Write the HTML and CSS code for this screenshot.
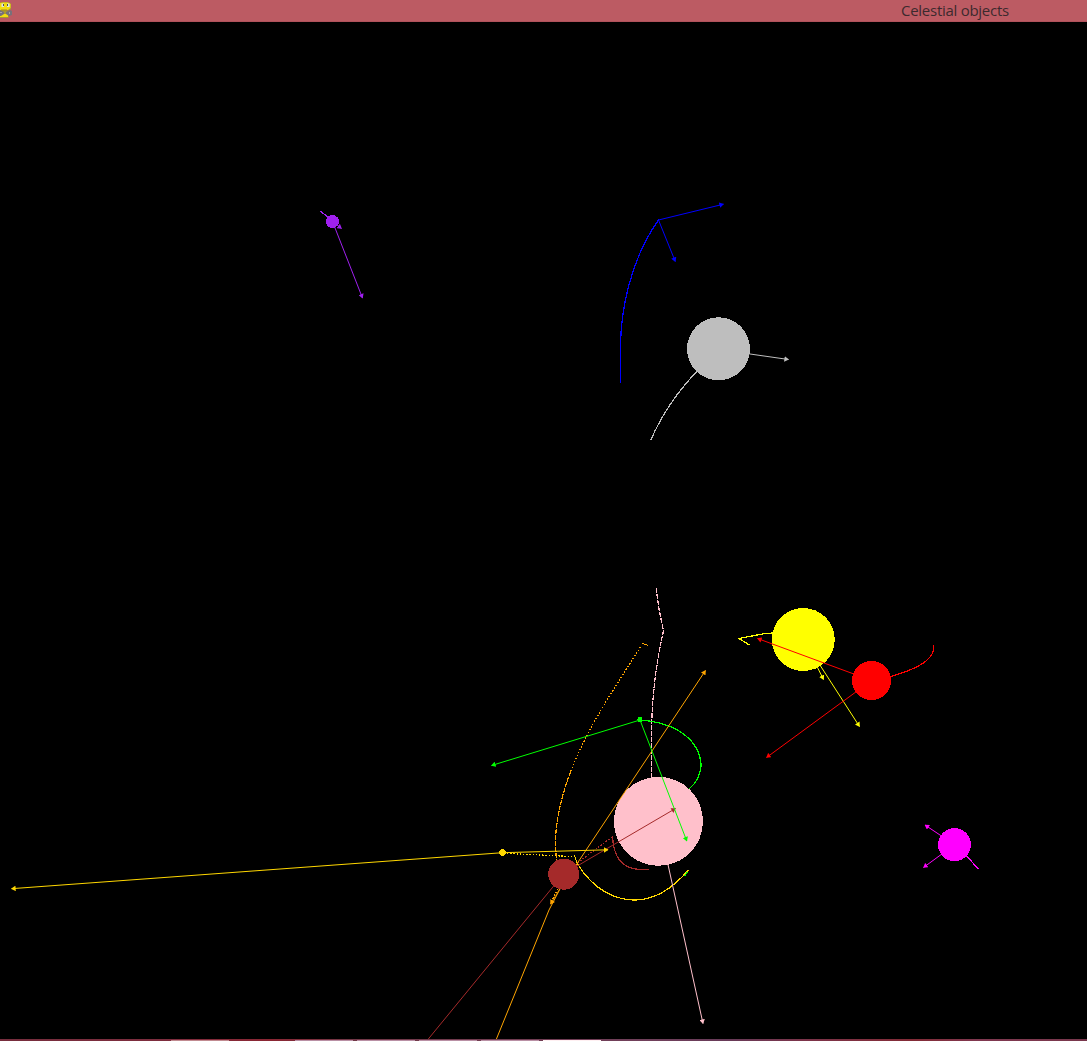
FILE: index.html
```
<!DOCTYPE html>
<html lang="en">
<head>
<meta charset="utf-8">
<title>Celestial objects</title>
<link rel="stylesheet" href="styles.css">
</head>
<body>
<div class="window">
  <header class="titlebar">
    <svg class="app-icon" viewBox="0 0 13 18" width="13" height="18">
      <path fill="#a79832" d="M0 1.500L3 1H8L11 2.500V8L9.500 9.500H7L9 14L8.500 17H0z"/>
      <path fill="#f2dc12" d="M0 2L3 1.500H8L10.500 3V7L8 9H0zM0 13H8V16H0z"/>
      <path fill="#dce6e4" d="M1.500 2.500H4V6H1.500zM7 2.500H9.500V6H7z"/>
      <path fill="#545454" d="M3 3h1v2H3zM7 3h1v2H7z"/>
      <path fill="#77717a" d="M0 9L4 11V13L1 15H0zM6 11L10 9L12 10V14L9 15L6 13z"/>
      <path fill="#aaa0a2" d="M0 11h2v1H0zM9 11h1v2H9z"/>
      <path fill="#a58b20" d="M1 8.500h6v1H1z"/>
    </svg>
    <h1 class="title">Celestial objects</h1>
  </header>
  <svg class="space" viewBox="0 22 1087 1017" width="1087" height="1017">
    <defs>
      <marker id="head" viewBox="0 0 5 6" refX="4.500" refY="3" markerWidth="5" markerHeight="5.500" markerUnits="userSpaceOnUse" orient="auto">
        <path d="M0 0L5 3L0 6z" fill="context-stroke"/>
      </marker>
    </defs>

    <g class="trails">
      <path class="purple" d="M320.5 211.5L332 220"/>
      <path class="blue" d="M658.5 220C630 260 620.5 312 620.5 347V383"/>
      <path class="silver" d="M650.5 440.5Q668 401 697 371.500"/>
      <path class="yellow" d="M749.5 645L739 638.500L765 633.500L773 633"/>
      <path class="red" d="M891 676.500Q931 665 933.5 650V645"/>
      <path class="pink dash" d="M656 588.500L659 609L663.500 631Q652 680 651.500 735V778"/>
      <path class="orange dots" d="M640.500 647L612 692Q583 738 571 771"/>
      <path class="orange" d="M642.500 643.500L648.500 645.500"/>
      <path class="orange dash" d="M571 771C559 801 555 830 555.500 845L556.500 861"/>
      <path class="orange dots" d="M558 889L551 902"/>
      <path class="lime" d="M640 720C681 723 701 744 701 766Q700 780 689 789"/>
      <path class="brown" d="M648.500 869.500H640C625 869 613.500 860 612.500 836"/>
      <path class="brown dots" d="M612 837L576 864"/>
      <path class="gold dots" d="M507 853.500L573 856.500"/>
      <path class="gold" d="M574.500 855.500L577 863Q589 883 606 892.500C634 907 661 902 688.500 870"/>
      <path class="lime" d="M684.500 876L687.500 872"/>
      <path class="magenta" d="M966.500 856L978.500 869"/>
    </g>

    <g class="bodies">
      <circle class="purple" cx="332.500" cy="221.500" r="6.500"/>
      <circle class="blue" cx="658.500" cy="220" r="1"/>
      <circle class="silver" cx="718.500" cy="348.800" r="31.500"/>
      <circle class="yellow" cx="803.300" cy="639.500" r="31.500"/>
      <circle class="red" cx="871.500" cy="680.500" r="19.500"/>
      <circle class="pink" cx="658.500" cy="821.300" r="44.500"/>
      <circle class="lime" cx="640" cy="719.500" r="2.500"/>
      <path class="gold" d="M501 849h3v1h1v1h1v3h-1v1h-1v1h-3v-1h-1v-1h-1v-3h1v-1h1z"/>
      <circle class="magenta" cx="954.500" cy="844.700" r="16.500"/>
    </g>

    <g class="vectors">
      <path class="purple" d="M332.500 221.500L362.500 298"/>
      <path class="purple" d="M332.500 221.500L341.500 228.500"/>
      <path class="blue" d="M658.500 220L723.500 204.200"/>
      <path class="blue" d="M658.500 220L675.300 261.500"/>
      <path class="silver" d="M718.500 349.500L788.500 359.500"/>
      <path class="yellow" d="M803.500 639.500L859.500 726.500"/>
      <path class="yellow" d="M803.500 639.500L823.500 679.500"/>
      <path class="red" d="M871.500 680.500L757.500 638.500"/>
      <path class="red" d="M871.500 680.500L766.500 757.500"/>
      <path class="pink" d="M658.500 821.500L703 1023.500"/>
      <path class="orange" d="M563.500 884L705.500 670.500"/>
      <path class="orange small" d="M561 887L550.500 904"/>
      <path class="orange plain" d="M561 887L549 910L496 1040"/>
      <path class="brown" d="M563.500 874L675.500 808.500"/>
      <path class="brown plain" d="M563.500 874L427.500 1040"/>
      <path class="lime" d="M640 720L491.500 765.500"/>
      <path class="lime" d="M640 720L686.800 841"/>
      <path class="gold" d="M502.500 852.700L608 849.800"/>
      <path class="gold" d="M502.500 852.700L11.500 888.700"/>
      <path class="magenta" d="M954.500 844.700L925 825"/>
      <path class="magenta" d="M954.500 844.700L923.500 867.500"/>
    </g>
    <g class="bodies">
      <circle class="brown" cx="563.700" cy="874.200" r="15.500"/>
    </g>
  </svg>
  <footer class="taskbar">
    <span class="task rose"></span>
    <span class="task"></span>
    <span class="task"></span>
    <span class="task"></span>
    <span class="task"></span>
    <span class="task active"></span>
  </footer>
</div>
</body>
</html>
```
FILE: styles.css
```
body {
  margin: 0;
  background: #000;
}

.window {
  display: flex;
  flex-direction: column;
  width: 1087px;
  height: 1041px;
  overflow: hidden;
}

.titlebar {
  display: flex;
  flex: none;
  box-sizing: border-box;
  height: 22px;
  padding-top: 1px;
  background: #bc5b63;
  border-bottom: 1px solid #b0525b;
}

.app-icon {
  flex: none;
}

.title {
  margin: 0 0 0 888px;
  font: 400 15px/19px "Open Sans", "Noto Sans", sans-serif;
  letter-spacing: -0.27px;
  color: #3c2a2e;
  white-space: nowrap;
}

.space {
  display: block;
  flex: none;
  background: #000;
}

.purple { --tone: #a020f0; }
.blue { --tone: #0000ff; }
.silver { --tone: #bebebe; }
.yellow { --tone: #ffff00; }
.red { --tone: #ff0000; }
.pink { --tone: #ffc0cb; }
.orange { --tone: #ffa500; }
.lime { --tone: #00ff00; }
.brown { --tone: #a52a2a; }
.gold { --tone: #ffd700; }
.magenta { --tone: #ff00ff; }

.bodies > * {
  fill: var(--tone);
  shape-rendering: crispEdges;
}

.trails path {
  fill: none;
  stroke: var(--tone);
  stroke-width: 1.25;
  shape-rendering: crispEdges;
}

.trails .dots { stroke-dasharray: 1.5 1.7; }
.trails .dash { stroke-dasharray: 5 1; }

.vectors path {
  fill: none;
  stroke: var(--tone);
  stroke-width: 1;
  marker-end: url(#head);
}

.vectors .plain { marker-end: none; }
.vectors .small { stroke-width: 0.8; }

.taskbar {
  display: flex;
  gap: 4px;
  box-sizing: border-box;
  height: 2px;
  padding: 1px 0 0 171px;
  background: linear-gradient(90deg, #762d3d, #7d2d3e 15%, #8b2633 25%, #713746 32%, #70405b 60%, #673a58 67%, #7c344a 74%, #832b36 84%, #803850 90%, #78374c);
}

.task {
  width: 58px;
  height: 1px;
  background: #b990a5;
}

.task.rose {
  margin-right: 62px;
  background: #c18b91;
}

.task.active {
  background: #fff0f2;
}
```
